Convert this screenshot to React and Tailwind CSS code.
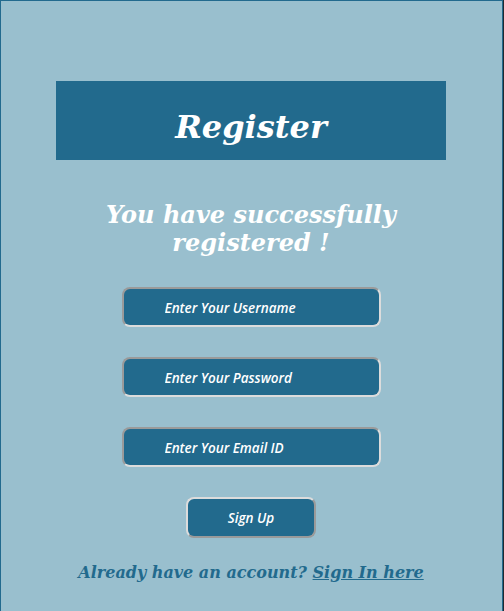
export default function App() {
  const serif = { fontFamily: '"DejaVu Serif", serif' };
  const inputCls =
    "w-[259px] h-[40px] rounded-[8px] border-2 border-t-[#9a9a9a] border-l-[#9a9a9a] border-b-[#dcdcdc] border-r-[#dcdcdc] bg-[#226a8d] pl-[41px] pt-[2px] text-[13.5px] font-semibold italic text-white placeholder:text-white outline-none";
  return (
    <div className="flex min-h-[611px] bg-[#1f2a30]">
      <div className="flex w-[503px] min-h-[611px] flex-col items-center border-l border-r border-t border-[#226a8e] bg-[#99bfce] pt-[80px] pr-[1px]">
        <div className="flex h-[79px] w-[390px] items-center justify-center bg-[#226a8d] pt-[12px]">
          <h1 className="text-[32px] font-bold italic text-white" style={serif}>
            Register
          </h1>
        </div>
        <p
          className="mt-[41px] w-[300px] text-center text-[24px] font-bold italic leading-[28px] text-white"
          style={serif}
        >
          You have successfully registered !
        </p>
        <div className="mt-[30px] flex flex-col items-center gap-[30px]" style={{ fontFamily: '"Open Sans", sans-serif' }}>
          <input className={inputCls} placeholder="Enter Your Username" />
          <input className={inputCls} placeholder="Enter Your Password" type="password" />
          <input className={inputCls} placeholder="Enter Your Email ID" />
          <button className="h-[41px] w-[130px] rounded-[8px] border-2 border-t-[#dcdcdc] border-l-[#dcdcdc] border-b-[#9a9a9a] border-r-[#9a9a9a] bg-[#226a8d] pt-[2px] text-[13.5px] font-semibold italic text-white">
            Sign Up
          </button>
        </div>
        <p className="mt-[23px] text-[16px] font-bold italic text-[#226a8d]" style={serif}>
          Already have an account? <a className="underline">Sign In here</a>
        </p>
      </div>
    </div>
  );
}
